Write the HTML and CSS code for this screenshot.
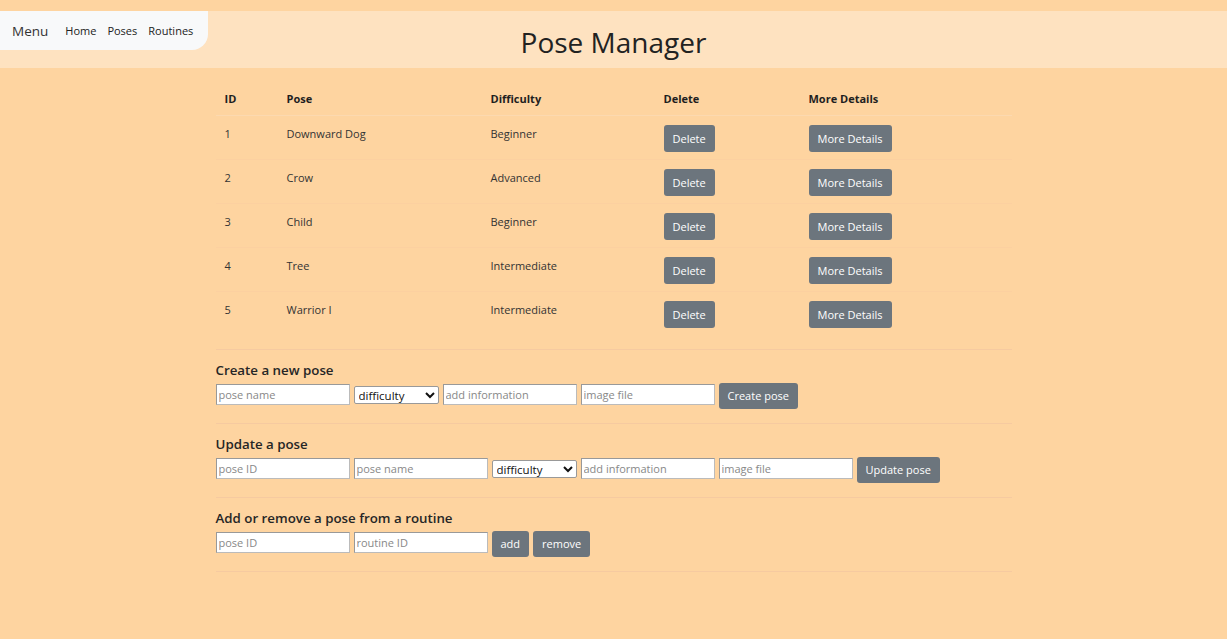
FILE: index.html
```html
<!DOCTYPE html>
<html>
<head>
<meta charset="utf-8">
<link rel="stylesheet" href="styles.css">
</head>
<body>
<header class="top">
  <nav class="menu">
    <span class="menu-title">Menu</span>
    <a class="menu-link">Home</a>
    <a class="menu-link">Poses</a>
    <a class="menu-link">Routines</a>
  </nav>
  <h1 class="title">Pose Manager</h1>
</header>
<main class="content">
  <table class="poses">
    <thead>
      <tr><th class="c-id">ID</th><th class="c-pose">Pose</th><th class="c-diff">Difficulty</th><th class="c-del">Delete</th><th class="c-more">More Details</th></tr>
    </thead>
    <tbody>
      <tr><td>1</td><td>Downward Dog</td><td>Beginner</td><td><button class="btn">Delete</button></td><td><button class="btn">More Details</button></td></tr>
      <tr><td>2</td><td>Crow</td><td>Advanced</td><td><button class="btn">Delete</button></td><td><button class="btn">More Details</button></td></tr>
      <tr><td>3</td><td>Child</td><td>Beginner</td><td><button class="btn">Delete</button></td><td><button class="btn">More Details</button></td></tr>
      <tr><td>4</td><td>Tree</td><td>Intermediate</td><td><button class="btn">Delete</button></td><td><button class="btn">More Details</button></td></tr>
      <tr><td>5</td><td>Warrior I</td><td>Intermediate</td><td><button class="btn">Delete</button></td><td><button class="btn">More Details</button></td></tr>
    </tbody>
  </table>

  <section class="form-block">
    <h2 class="form-title">Create a new pose</h2>
    <div class="form-row">
      <input class="field" placeholder="pose name">
      <select class="pick"><option>difficulty</option></select>
      <input class="field" placeholder="add information">
      <input class="field" placeholder="image file">
      <button class="btn btn-form">Create pose</button>
    </div>
  </section>

  <section class="form-block">
    <h2 class="form-title">Update a pose</h2>
    <div class="form-row">
      <input class="field" placeholder="pose ID">
      <input class="field" placeholder="pose name">
      <select class="pick"><option>difficulty</option></select>
      <input class="field" placeholder="add information">
      <input class="field" placeholder="image file">
      <button class="btn btn-form">Update pose</button>
    </div>
  </section>

  <section class="form-block last">
    <h2 class="form-title">Add or remove a pose from a routine</h2>
    <div class="form-row">
      <input class="field" placeholder="pose ID">
      <input class="field" placeholder="routine ID">
      <button class="btn btn-form">add</button>
      <button class="btn btn-form">remove</button>
    </div>
  </section>
</main>
</body>
</html>
```

FILE: styles.css
```css
* { box-sizing: border-box; }
html, body { height: 100%; }
body {
  margin: 0;
  padding-top: 11px;
  background: #fed4a0;
  font-family: "Open Sans", "Noto Sans", sans-serif;
  color: #212529;
  font-size: 11px;
}
.top {
  position: relative;
  height: 57px;
  background: #fee2c0;
  display: flex;
  justify-content: center;
}
.menu {
  position: absolute;
  left: 0;
  top: 0;
  width: 208px;
  height: 39px;
  background: #f8f9fa;
  border-bottom-right-radius: 16px;
  display: flex;
  align-items: center;
  padding-left: 12px;
}
.menu-title {
  font-size: 13.5px;
  color: #333;
  margin-right: 17px;
}
.menu-link {
  font-size: 11px;
  color: #222;
  margin-right: 11px;
}
.title {
  margin: 0;
  font-size: 28px;
  font-weight: 500;
  line-height: 62px;
  color: #222;
}
.content {
  width: 796px;
  margin: 15px auto 0;
}
.poses {
  width: 100%;
  border-collapse: collapse;
  table-layout: fixed;
}
.c-id { width: 62px; }
.c-pose { width: 204px; }
.c-diff { width: 173px; }
.c-del { width: 145px; }
.c-more { width: 212px; }
.poses th {
  text-align: left;
  font-weight: 700;
  font-size: 11px;
  padding: 7px 9px 7px;
  line-height: 18px;
  color: #1f1f1f;
}
.poses td {
  vertical-align: top;
  padding: 9px 9px 7px;
  border-top: 1px solid #fcd0a0;
  font-size: 11px;
  line-height: 18px;
  color: #333;
}
.poses tbody tr:first-child td { border-top: 1px solid #fcd9b0; }
.btn {
  background: #6c757d;
  color: #fff;
  border: none;
  border-radius: 3px;
  font-family: inherit;
  font-size: 11px;
  height: 27px;
  padding: 0 9px;
  line-height: 27px;
}
.form-block {
  border-top: 1px solid #f6caa0;
  padding: 11px 0 14px;
}
.form-block.last { border-bottom: 1px solid #f6caa0; }
.poses + .form-block { margin-top: 14px; }
.form-title {
  margin: 0 0 4px;
  font-size: 13.3px;
  font-weight: 600;
  line-height: 18px;
  color: #262626;
}
.form-row {
  display: flex;
  align-items: flex-start;
  gap: 4px;
  height: 26px;
}
.field {
  width: 134px;
  height: 21px;
  margin-top: 1px;
  border: 1px solid #bbb;
  border-top-color: #999;
  border-left-color: #999;
  font-family: inherit;
  font-size: 11px;
  padding: 1px 2px;
  background: #fff;
}
.field::placeholder { color: #888; }
.pick {
  width: 85px;
  height: 18px;
  margin-top: 3px;
  font-family: inherit;
  font-size: 11.5px;
  background: #fff;
  border: 1px solid #999;
  border-radius: 2px;
  color: #111;
}
.btn-form { height: 26px; line-height: 26px; }
```
